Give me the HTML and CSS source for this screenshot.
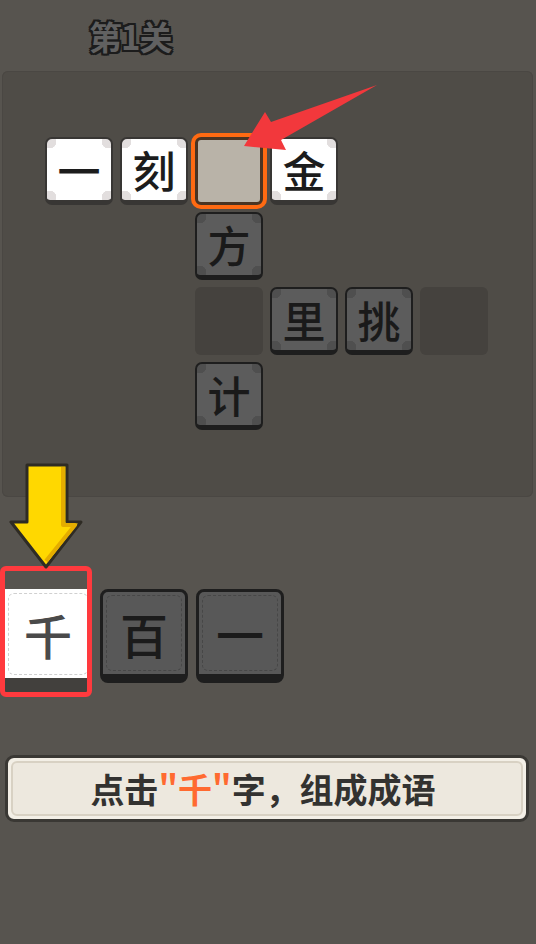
FILE: index.html
```html
<!DOCTYPE html>
<html lang="zh-CN">
<head>
    <meta charset="UTF-8">
    <meta name="viewport" content="width=device-width, initial-scale=1.0">
    <title>第1关</title>
    <link rel="stylesheet" href="styles.css">
</head>
<body>
    <div class="page">
        <div class="header">
            <h1 class="level-title">第1关</h1>
        </div>

        <div class="board-panel">
            <div class="board">
                <div class="tile lit">一</div>
                <div class="tile lit">刻</div>
                <div class="slot target"></div>
                <div class="tile lit">金</div>
                <div class="cell"></div>
                <div class="cell"></div>

                <div class="cell"></div>
                <div class="cell"></div>
                <div class="tile">方</div>
                <div class="cell"></div>
                <div class="cell"></div>
                <div class="cell"></div>

                <div class="cell"></div>
                <div class="cell"></div>
                <div class="slot"></div>
                <div class="tile">里</div>
                <div class="tile">挑</div>
                <div class="slot"></div>

                <div class="cell"></div>
                <div class="cell"></div>
                <div class="tile">计</div>
                <div class="cell"></div>
                <div class="cell"></div>
                <div class="cell"></div>
            </div>
        </div>

        <div class="tray">
            <div class="pick lit">千</div>
            <div class="pick">百</div>
            <div class="pick">一</div>
            <div class="pick-focus"></div>
        </div>

        <div class="hint-bar">
            <div class="hint-inner">点击<span class="hl">"千"</span>字，组成成语</div>
        </div>

        <!-- 引导箭头 -->
        <svg class="red-arrow" width="140" height="75" viewBox="0 0 140 75">
            <polygon points="4,66 25,32 31,42 137,5 41,60 46,70" fill="#f2383c"/>
        </svg>
        <svg class="yellow-arrow" width="78" height="110" viewBox="0 0 78 110">
            <polygon points="19,3 59,3 59,60 73,60 38,105 3,60 19,60" fill="#ffd800" stroke="#2e2b24" stroke-width="3" stroke-linejoin="round"/>
            <polyline points="55,5 55,63 67,63 38,99" fill="none" stroke="#e4ad00" stroke-width="4" stroke-linejoin="round"/>
        </svg>
    </div>
</body>
</html>
```

FILE: styles.css
```css
html, body {
    margin: 0;
    padding: 0;
}
body {
    background-color: #57544f;
    font-family: "Noto Sans CJK SC", "Noto Sans", sans-serif;
}
.page {
    position: relative;
    width: 536px;
    height: 944px;
    overflow: hidden;
}
.header {
    height: 71px;
    display: flex;
    align-items: center;
    padding-left: 89px;
    box-sizing: border-box;
}
.level-title {
    margin: 0;
    font-size: 33px;
    font-weight: bold;
    color: #616161;
    letter-spacing: -1px;
    text-shadow:
        2px 0 0 #1c1c1c, -2px 0 0 #1c1c1c, 0 2px 0 #1c1c1c, 0 -2px 0 #1c1c1c,
        2px 2px 0 #1c1c1c, -2px -2px 0 #1c1c1c, 2px -2px 0 #1c1c1c, -2px 2px 0 #1c1c1c;
}
.board-panel {
    margin: 0 3px 0 2px;
    height: 426px;
    background-color: #4f4c47;
    border-radius: 6px;
    box-shadow: inset 0 0 0 1px #4a4743;
    padding: 66px 0 0 43px;
    box-sizing: border-box;
}
.board {
    display: grid;
    grid-template-columns: repeat(6, 68px);
    grid-template-rows: repeat(4, 68px);
    gap: 7px;
}
.tile {
    box-sizing: border-box;
    border: 2px solid #1e1e1e;
    border-bottom-width: 5px;
    border-radius: 7px;
    background:
        radial-gradient(circle at 3px 3px, #4f4f4f 6px, transparent 6.5px),
        radial-gradient(circle at calc(100% - 3px) 3px, #4f4f4f 6px, transparent 6.5px),
        radial-gradient(circle at 3px calc(100% - 3px), #4f4f4f 6px, transparent 6.5px),
        radial-gradient(circle at calc(100% - 3px) calc(100% - 3px), #4f4f4f 6px, transparent 6.5px),
        #5c5c5c;
    display: flex;
    align-items: center;
    justify-content: center;
    font-size: 43px;
    font-weight: 500;
    color: #1a1a1a;
    line-height: 1;
}
.tile.lit {
    border-color: #383634;
    background:
        radial-gradient(circle at 3px 3px, #e2dede 6px, transparent 6.5px),
        radial-gradient(circle at calc(100% - 3px) 3px, #e2dede 6px, transparent 6.5px),
        radial-gradient(circle at 3px calc(100% - 3px), #e2dede 6px, transparent 6.5px),
        radial-gradient(circle at calc(100% - 3px) calc(100% - 3px), #e2dede 6px, transparent 6.5px),
        #ffffff;
    color: #1c1c1c;
}
.slot {
    border-radius: 6px;
    background-color: #45423e;
}
.slot.target {
    box-sizing: border-box;
    border: 3px solid #4a3423;
    background-color: #b9b3a8;
    box-shadow: 0 0 0 4px #ff6a12;
}
.tray {
    position: relative;
    margin-top: 92px;
    padding-left: 4px;
    display: flex;
    gap: 8px;
}
.pick {
    position: relative;
    box-sizing: border-box;
    width: 88px;
    height: 94px;
    border: 3px solid #1e1e1e;
    border-bottom-width: 9px;
    border-radius: 8px;
    background-color: #585858;
    display: flex;
    align-items: center;
    justify-content: center;
    font-size: 48px;
    font-weight: 500;
    color: #1b1b1b;
    line-height: 1;
}
.pick::before {
    content: "";
    position: absolute;
    inset: 3px;
    border: 1px dashed #474747;
    border-radius: 6px;
}
.pick.lit {
    border-color: #42403d;
    border-top-width: 0;
    border-left-width: 0;
    border-right-width: 0;
    border-bottom-width: 14px;
    border-radius: 0;
    height: 103px;
    background-color: #ffffff;
    color: #4a4a4a;
}
.pick.lit::before {
    inset: 4px 4px 3px 4px;
    border-color: #d0d0d0;
}
.pick-focus {
    position: absolute;
    left: 0;
    top: -23px;
    width: 92px;
    height: 131px;
    box-sizing: border-box;
    border: 5px solid #ff3a3e;
    border-radius: 6px;
}
.hint-bar {
    margin: 63px 7px 0 5px;
    height: 67px;
    box-sizing: border-box;
    border: 3px solid #3a3834;
    border-radius: 9px;
    background-color: #f3efe6;
    padding: 3px;
}
.hint-inner {
    height: 100%;
    box-sizing: border-box;
    border: 2px solid #d8d1c3;
    border-radius: 6px;
    background-color: #ede8de;
    display: flex;
    align-items: center;
    justify-content: center;
    font-size: 34px;
    font-weight: bold;
    color: #333230;
    padding-right: 8px;
}
.hl {
    color: #ff6a30;
}
.red-arrow {
    position: absolute;
    left: 240px;
    top: 80px;
}
.yellow-arrow {
    position: absolute;
    left: 8px;
    top: 462px;
}
```
